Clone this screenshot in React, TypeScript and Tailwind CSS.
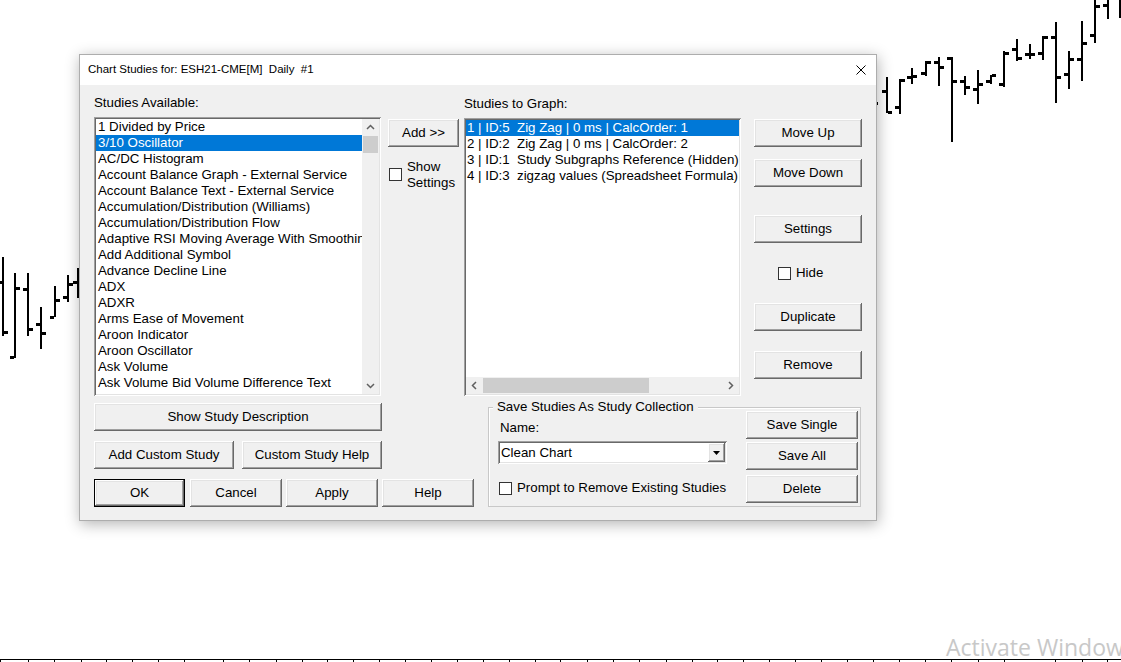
import clsx from "clsx"

const LEFT_ITEMS = [
  "1 Divided by Price",
  "3/10 Oscillator",
  "AC/DC Histogram",
  "Account Balance Graph - External Service",
  "Account Balance Text - External Service",
  "Accumulation/Distribution (Williams)",
  "Accumulation/Distribution Flow",
  "Adaptive RSI Moving Average With Smoothing",
  "Add Additional Symbol",
  "Advance Decline Line",
  "ADX",
  "ADXR",
  "Arms Ease of Movement",
  "Aroon Indicator",
  "Aroon Oscillator",
  "Ask Volume",
  "Ask Volume Bid Volume Difference Text",
  "Ask/Bid Volume Difference Bars",
]

const RIGHT_ITEMS = [
  "1 | ID:5  Zig Zag | 0 ms | CalcOrder: 1",
  "2 | ID:2  Zig Zag | 0 ms | CalcOrder: 2",
  "3 | ID:1  Study Subgraphs Reference (Hidden)",
  "4 | ID:3  zigzag values (Spreadsheet Formula)",
]

// x, high, low, open, close
const BARS: [number, number, number, number | null, number | null][] = [
  [2, 257, 336, 282, 332],
  [14, 273, 358, 357, 288],
  [27, 273, 336, 289, 329],
  [40, 307, 349, 324, 333],
  [54, 286, 317, 317, 300],
  [67, 275, 302, 297, 284],
  [77, 268, 298, 282, null],
  [872, 90, 110, 95, 103],
  [886, 77, 113, 91, 112],
  [899, 79, 114, 107, 80],
  [911, 68, 84, 77, 76],
  [925, 61, 76, 73, 62],
  [938, 57, 86, 62, 67],
  [951, 57, 142, 58, 81],
  [964, 76, 95, 81, 87],
  [977, 70, 104, 89, 84],
  [990, 75, 84, 81, 75],
  [1003, 51, 87, 84, 53],
  [1016, 39, 61, 49, 58],
  [1029, 44, 59, 54, 54],
  [1042, 36, 60, 53, 37],
  [1055, 22, 103, 37, 77],
  [1068, 51, 89, 74, 59],
  [1081, 21, 81, 59, 43],
  [1094, 0, 43, 35, 6],
  [1107, 0, 19, 5, null],
  [1119, 0, 18, null, null],
]

const TICKS = [
  0, 28, 54, 81, 106, 132, 158, 184, 223, 249, 276, 302, 327, 353, 379, 405,
  431, 457, 483, 509, 535, 560, 587, 613, 639, 666, 692, 717, 743, 769, 795,
  821, 847, 873, 899, 925, 951, 978, 1004, 1055, 1082, 1107,
]

const RAISED =
  "bg-[#f0f0f0] shadow-[inset_-1px_-1px_#696969,inset_1px_1px_#fff,inset_-2px_-2px_#a0a0a0,inset_2px_2px_#e3e3e3]"
const SUNKEN =
  "shadow-[inset_1px_1px_#a0a0a0,inset_-1px_-1px_#fff,inset_2px_2px_#696969,inset_-2px_-2px_#e3e3e3]"

function PriceBars() {
  return (
    <svg width="1121" height="662" className="block" shapeRendering="crispEdges">
      {BARS.map(([x, hi, lo, o, c], i) => (
        <g key={i} fill="#000">
          <rect x={x} y={hi} width={2} height={lo - hi} />
          {o !== null && <rect x={x - 4} y={o - 1} width={4} height={3} />}
          {c !== null && <rect x={x + 2} y={c - 1} width={4} height={3} />}
        </g>
      ))}
      <rect x={0} y={659} width={1121} height={1} fill="#000" />
      {TICKS.map((t) => (
        <rect key={t} x={t} y={659} width={1} height={3} fill="#000" />
      ))}
    </svg>
  )
}

function Btn({
  label,
  className,
  isDefault = false,
}: {
  label: string
  className?: string
  isDefault?: boolean
}) {
  return (
    <button
      type="button"
      className={clsx(
        "flex h-[28px] shrink-0 items-center justify-center text-black",
        isDefault
          ? "bg-[#f0f0f0] shadow-[inset_0_0_0_1px_#000,inset_-2px_-2px_#696969,inset_2px_2px_#fff,inset_-3px_-3px_#a0a0a0,inset_3px_3px_#e3e3e3]"
          : RAISED,
        className
      )}
    >
      {label}
    </button>
  )
}

function CheckBox() {
  return <span className="block h-[13px] w-[13px] shrink-0 border border-[#333] bg-white" />
}

function Chevron({ dir }: { dir: "up" | "down" | "left" | "right" }) {
  const pts = {
    up: "1,5 4.5,1.5 8,5",
    down: "1,2 4.5,5.5 8,2",
    left: "5,1 1.5,4.5 5,8",
    right: "2,1 5.5,4.5 2,8",
  }[dir]
  const vertical = dir === "up" || dir === "down"
  return (
    <svg
      width={vertical ? 9 : 7}
      height={vertical ? 7 : 9}
      viewBox={vertical ? "0 0 9 7" : "0 0 7 9"}
      fill="none"
      stroke="#606060"
      strokeWidth="1.5"
    >
      <polyline points={pts} />
    </svg>
  )
}

function CloseIcon() {
  return (
    <svg width="10" height="10" viewBox="0 0 10 10" stroke="#000" strokeWidth="1">
      <path d="M0.5 0.5L9.5 9.5M9.5 0.5L0.5 9.5" />
    </svg>
  )
}

function StudiesAvailable() {
  return (
    <div className={clsx("mt-[6px] flex h-[279px] bg-white p-[2px]", SUNKEN)}>
      <div className="min-w-0 flex-1 overflow-hidden">
        {LEFT_ITEMS.map((item, i) => (
          <div
            key={item}
            className={clsx(
              "h-[16px] whitespace-nowrap pl-[2px] leading-[16px]",
              i === 1 && "bg-[#0078d7] text-white"
            )}
          >
            {item}
          </div>
        ))}
      </div>
      <div className="flex w-[17px] flex-col bg-[#f0f0f0]">
        <div className="flex h-[17px] items-center justify-center">
          <Chevron dir="up" />
        </div>
        <div className="flex-1">
          <div className="mx-[1px] h-[17px] bg-[#cdcdcd]" />
        </div>
        <div className="flex h-[17px] items-center justify-center">
          <Chevron dir="down" />
        </div>
      </div>
    </div>
  )
}

function StudiesToGraph() {
  return (
    <div className={clsx("mt-[6px] flex h-[278px] flex-col bg-white p-[2px]", SUNKEN)}>
      <div className="min-h-0 flex-1 overflow-hidden">
        {RIGHT_ITEMS.map((item, i) => (
          <div
            key={item}
            className={clsx(
              "h-[16px] whitespace-pre pl-[1px] leading-[16px]",
              i === 0 && "bg-[#0078d7] text-white"
            )}
          >
            {item}
          </div>
        ))}
      </div>
      <div className="flex h-[17px] bg-[#f0f0f0]">
        <div className="flex w-[17px] items-center justify-center">
          <Chevron dir="left" />
        </div>
        <div className="flex-1 py-[1px]">
          <div className="h-full w-[166px] bg-[#cdcdcd]" />
        </div>
        <div className="flex w-[17px] items-center justify-center">
          <Chevron dir="right" />
        </div>
      </div>
    </div>
  )
}

function SaveCollection() {
  return (
    <div className="relative ml-[14px] mt-[11px] flex h-[100px] w-[373px] border border-[#c8c8c8] shadow-[inset_1px_1px_#fff]">
      <span className="absolute left-[4px] top-[-9px] bg-[#f0f0f0] px-[4px] leading-[16px]">
        Save Studies As Study Collection
      </span>
      <div className="w-[238px] shrink-0 pl-[9px]">
        <div className="mt-[12px] pl-[2px] leading-[16px]">Name:</div>
        <div className={clsx("mt-[5px] flex h-[23px] w-[229px] items-center bg-white p-[2px]", SUNKEN)}>
          <span className="flex-1 pl-[1px] leading-[16px]">Clean Chart</span>
          <span className={clsx("flex h-[19px] w-[17px] items-center justify-center", RAISED)}>
            <svg width="7" height="4" viewBox="0 0 7 4">
              <polygon points="0,0 7,0 3.5,4" fill="#000" />
            </svg>
          </span>
        </div>
        <div className="mt-[16px] flex h-[16px] items-center pl-[1px]">
          <CheckBox />
          <span className="ml-[5px] whitespace-nowrap leading-[16px]">
            Prompt to Remove Existing Studies
          </span>
        </div>
      </div>
      <div className="ml-[19px] mt-[3px] flex flex-col">
        <Btn label="Save Single" className="w-[112px]" />
        <Btn label="Save All" className="mt-[3px] w-[112px]" />
        <Btn label="Delete" className="mt-[5px] w-[112px]" />
      </div>
    </div>
  )
}

function ChartStudiesDialog() {
  return (
    <div className="absolute left-[79px] top-[54px] flex h-[467px] w-[798px] flex-col border border-[#adadad] bg-[#f0f0f0] shadow-[1px_3px_14px_rgba(0,0,0,0.3)]">
      <div className="flex h-[30px] shrink-0 items-center justify-between bg-white pl-[8px] pr-[10px]">
        <span className="whitespace-pre text-[11.5px]">
          {"Chart Studies for: ESH21-CME[M]  Daily  #1"}
        </span>
        <CloseIcon />
      </div>

      <div className="flex flex-col px-[14px] pt-[10px]">
        <div className="flex items-start">
          <div className="w-[287px]">
            <div className="h-[16px] leading-[16px]">Studies Available:</div>
            <StudiesAvailable />
          </div>

          <div className="ml-[7px] mt-[24px] w-[71px]">
            <Btn label="Add >>" className="w-[71px]" />
            <div className="mt-[12px] flex items-start">
              <span className="ml-[1px] mt-[9px]">
                <CheckBox />
              </span>
              <span className="ml-[5px] leading-[16px]">
                Show
                <br />
                Settings
              </span>
            </div>
          </div>

          <div className="ml-[5px] mt-[1px] w-[277px]">
            <div className="h-[16px] leading-[16px]">Studies to Graph:</div>
            <StudiesToGraph />
          </div>

          <div className="ml-[13px] mt-[24px] flex w-[108px] flex-col">
            <Btn label="Move Up" className="w-[108px]" />
            <Btn label="Move Down" className="mt-[12px] w-[108px]" />
            <Btn label="Settings" className="mt-[28px] w-[108px]" />
            <div className="mt-[22px] flex h-[16px] items-center pl-[24px]">
              <CheckBox />
              <span className="ml-[5px] leading-[16px]">Hide</span>
            </div>
            <Btn label="Duplicate" className="mt-[22px] w-[108px]" />
            <Btn label="Remove" className="mt-[20px] w-[108px]" />
          </div>
        </div>

        <div className="flex items-start">
          <div className="mt-[7px] flex w-[380px] flex-col">
            <Btn label="Show Study Description" className="w-[288px]" />
            <div className="mt-[10px] flex">
              <Btn label="Add Custom Study" className="w-[140px]" />
              <Btn label="Custom Study Help" className="ml-[8px] w-[140px]" />
            </div>
            <div className="mt-[10px] flex">
              <Btn label="OK" isDefault className="w-[91px]" />
              <Btn label="Cancel" className="ml-[5px] w-[92px]" />
              <Btn label="Apply" className="ml-[4px] w-[92px]" />
              <Btn label="Help" className="ml-[4px] w-[92px]" />
            </div>
          </div>
          <SaveCollection />
        </div>
      </div>
    </div>
  )
}

export default function App() {
  return (
    <div className="relative h-[662px] w-[1121px] overflow-hidden bg-white font-['Liberation_Sans',Arial,sans-serif] text-[13.3px] text-black">
      <PriceBars />
      <ChartStudiesDialog />
      <span className="absolute left-[946px] top-[635px] whitespace-nowrap font-['Open_Sans',sans-serif] text-[23px] leading-[24px] text-[#c8c8c8]">
        Activate Windows
      </span>
    </div>
  )
}
